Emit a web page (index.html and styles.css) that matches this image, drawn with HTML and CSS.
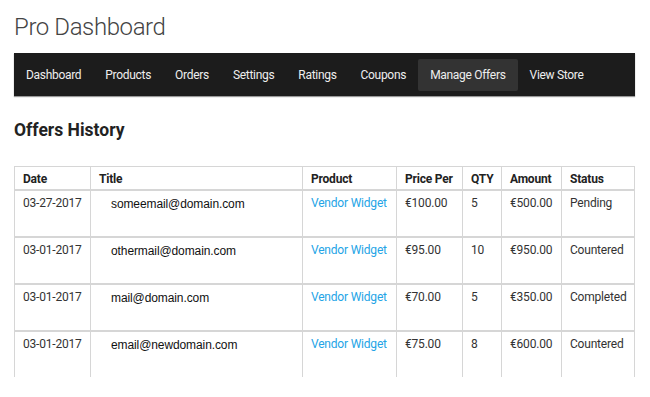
FILE: index.html
```html
<!DOCTYPE html>
<html lang="en">
<head>
  <meta charset="UTF-8">
  <meta name="viewport" content="width=device-width, initial-scale=1.0">
  <link rel="stylesheet" href="styles.css">
  <title>Pro Dashboard</title>
</head>
<body>
  <h1 class="page-title">Pro Dashboard</h1>
  <nav class="menu">
    <a href="#">Dashboard</a>
    <a href="#">Products</a>
    <a href="#">Orders</a>
    <a href="#">Settings</a>
    <a href="#">Ratings</a>
    <a href="#">Coupons</a>
    <a href="#" class="active">Manage Offers</a>
    <a href="#">View Store</a>
  </nav>
  <h3 class="section-title">Offers History</h3>
  <div class="table-wrap">
    <table class="offers">
      <colgroup>
        <col class="c-date">
        <col class="c-title">
        <col class="c-product">
        <col class="c-price">
        <col class="c-qty">
        <col class="c-amount">
        <col class="c-status">
      </colgroup>
      <thead>
        <tr>
          <th>Date</th>
          <th>Title</th>
          <th>Product</th>
          <th>Price Per</th>
          <th>QTY</th>
          <th>Amount</th>
          <th>Status</th>
        </tr>
      </thead>
      <tbody>
        <tr>
          <td>03-27-2017</td>
          <td><span class="email">someemail@domain.com</span></td>
          <td><a href="#">Vendor Widget</a></td>
          <td>€100.00</td>
          <td>5</td>
          <td>€500.00</td>
          <td>Pending</td>
        </tr>
        <tr>
          <td>03-01-2017</td>
          <td><span class="email">othermail@domain.com</span></td>
          <td><a href="#">Vendor Widget</a></td>
          <td>€95.00</td>
          <td>10</td>
          <td>€950.00</td>
          <td>Countered</td>
        </tr>
        <tr>
          <td>03-01-2017</td>
          <td><span class="email">mail@domain.com</span></td>
          <td><a href="#">Vendor Widget</a></td>
          <td>€70.00</td>
          <td>5</td>
          <td>€350.00</td>
          <td>Completed</td>
        </tr>
        <tr>
          <td>03-01-2017</td>
          <td><span class="email">email@newdomain.com</span></td>
          <td><a href="#">Vendor Widget</a></td>
          <td>€75.00</td>
          <td>8</td>
          <td>€600.00</td>
          <td>Countered</td>
        </tr>
      </tbody>
    </table>
  </div>
</body>
</html>
```
FILE: styles.css
```css
body {
  margin: 0;
  padding: 0 15px 0 14px;
  font-family: "Roboto", sans-serif;
  font-size: 12px;
  letter-spacing: -0.2px;
  color: #333;
  background: #fff;
}

.page-title {
  font-weight: 300;
  font-size: 24px;
  letter-spacing: -0.4px;
  color: #444;
  margin: 13px 0 12px;
  line-height: 28px;
}

.menu {
  display: flex;
  align-items: center;
  background: #1c1c1c;
  padding: 6px 0;
  height: 31px;
  box-shadow: 0 1px 1px #999;
}

.menu a {
  color: #eee;
  text-decoration: none;
  white-space: nowrap;
  padding: 0 12px;
  line-height: 32px;
  letter-spacing: -0.3px;
  border-radius: 2px;
}

.menu a.active {
  background: #333;
}

.section-title {
  font-size: 17.5px;
  font-weight: bold;
  letter-spacing: 0;
  color: #222;
  margin: 24px 0 26px;
  line-height: 20px;
}

.table-wrap {
  height: 211px;
  overflow: hidden;
}

.offers {
  width: 100%;
  border-collapse: collapse;
  table-layout: fixed;
}

.c-date { width: 76px; }
.c-title { width: 212px; }
.c-product { width: 94px; }
.c-price { width: 66px; }
.c-qty { width: 39px; }
.c-amount { width: 60px; }

.offers th,
.offers td {
  border: 1px solid #d6d6d6;
  border-top-width: 2px;
  text-align: left;
  vertical-align: top;
  white-space: nowrap;
  padding: 4px 8px;
  line-height: 15px;
}

.offers th {
  border-top-width: 1px;
  border-bottom-width: 2px;
  color: #222;
  padding: 5px 8px 2px;
}

.offers td {
  height: 36px;
  padding-top: 5px;
}

.offers tbody tr:last-child td {
  height: 80px;
}

.offers a {
  color: #24a4e6;
  text-decoration: none;
}

.email {
  display: inline-block;
  font-family: "Liberation Sans", Arial, sans-serif;
  letter-spacing: -0.1px;
  color: #111;
  margin: 1px 0 0 12px;
}
```
